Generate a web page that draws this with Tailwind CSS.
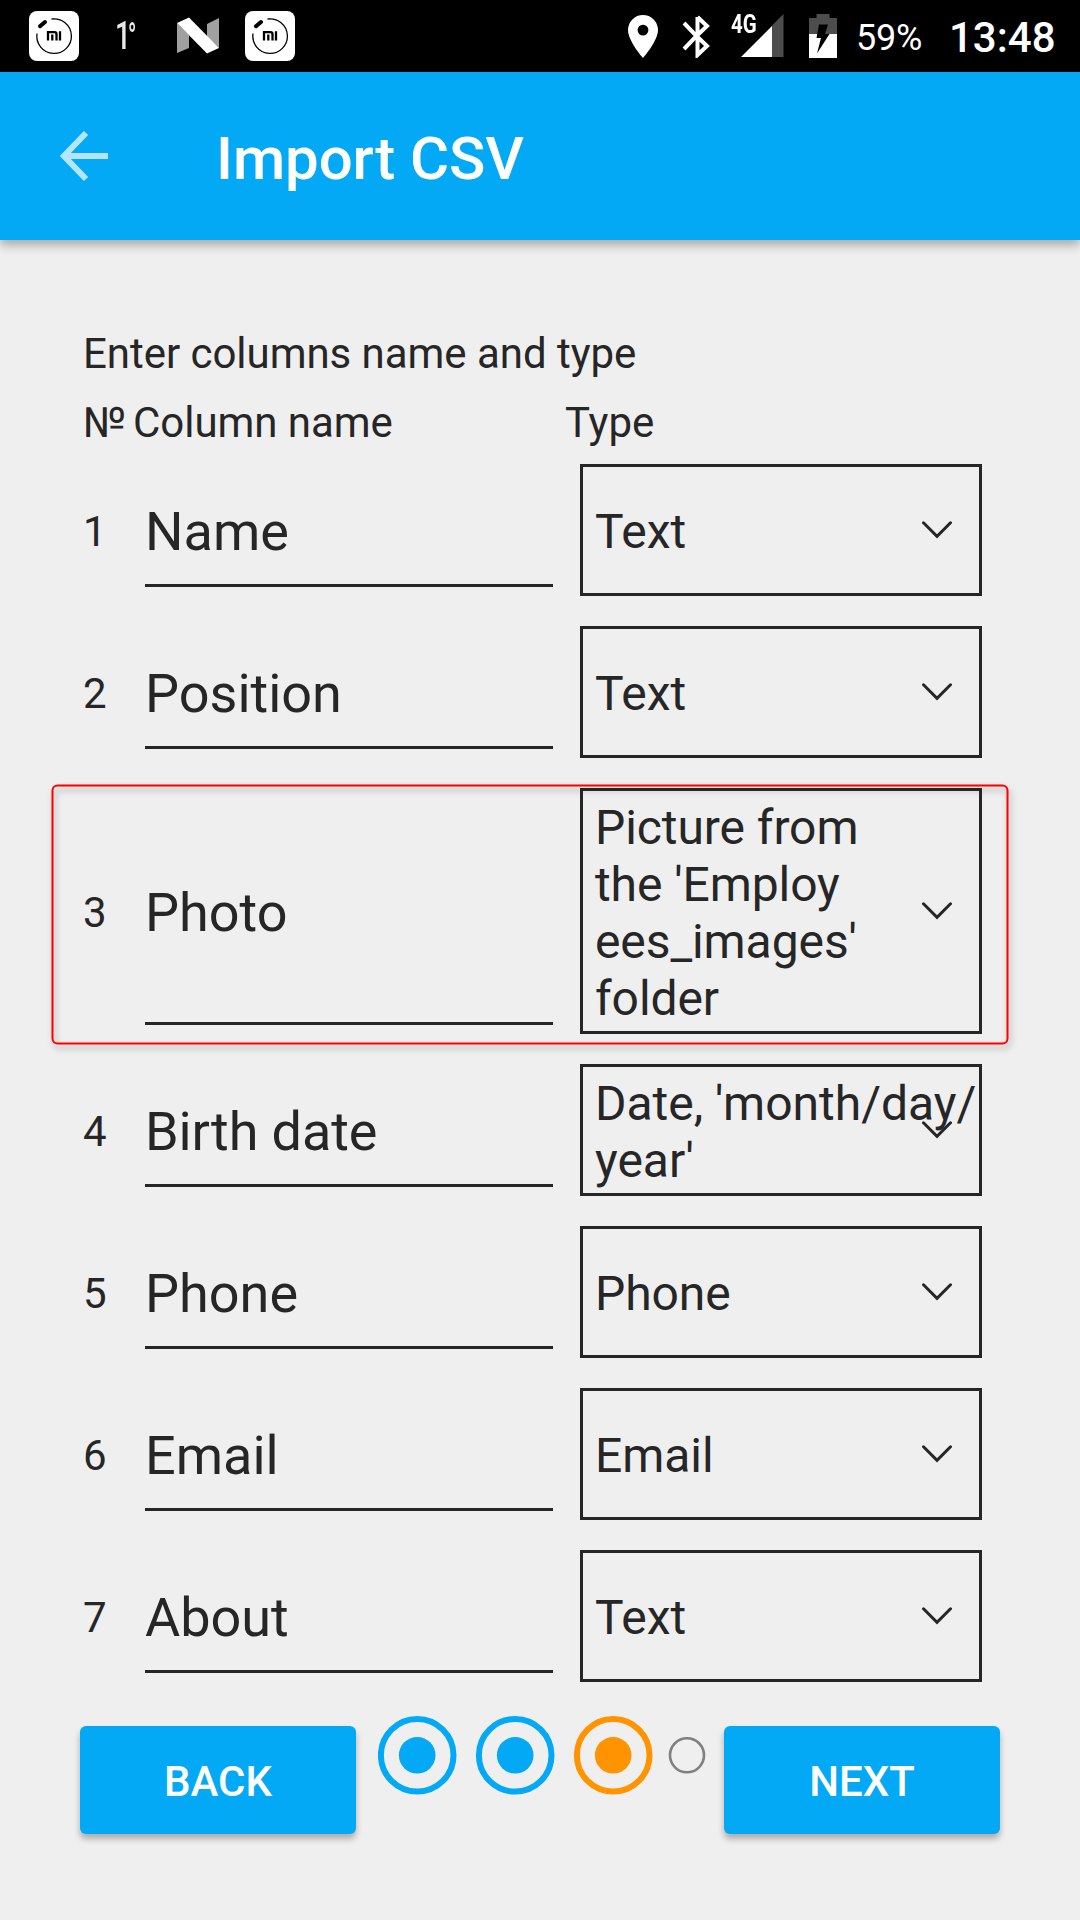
<!DOCTYPE html>
<html lang="en">
<head>
<meta charset="utf-8">
<title>Import CSV</title>
<script src="https://cdn.jsdelivr.net/npm/@tailwindcss/browser@4"></script>
</head>
<body class="w-[1080px] h-[1920px] overflow-hidden bg-[#efefef] font-['Roboto',sans-serif] text-[#262626]">
<svg class="hidden">
  <symbol id="chev" viewBox="0 0 30 18"><path d="M1.500 1.800 15 15.300 28.500 1.800" fill="none" stroke="#262626" stroke-width="3" stroke-linecap="round"/></symbol>
  <symbol id="mi" viewBox="0 0 50 50"><rect width="50" height="50" rx="8" fill="#fff"/><path d="M22.500 8A17.300 17.300 0 1 1 8 22.500" fill="none" stroke="#000" stroke-width="1.300"/><path d="M11 15.300 16 11" stroke="#000" stroke-width="4" stroke-linecap="round"/><path d="M19 29.500V21.200h6.500a2 2 0 0 1 2 2v6.300M23.300 23.500v6M31 20.200v9.300" fill="none" stroke="#000" stroke-width="2.300"/></symbol>
</svg>

<div class="h-[72px] bg-black flex items-center text-white">
  <svg class="w-[50px] h-[50px] ml-[29px]"><use href="#mi"/></svg>
  <div class="ml-[36px] w-[24px] h-[72px] flex text-[#e8e8e8]">
    <span class="text-[39px] font-medium leading-[72px] w-[13px] origin-left scale-x-[0.72]">1</span>
    <span class="text-[36px] font-bold leading-[74px] origin-left scale-x-[0.6]">°</span>
  </div>
  <svg class="w-[44px] h-[38px] ml-[37px]" viewBox="0 0 44 38"><path d="M1 6 13 18V31L1 36Z" fill="#a0a0a0"/><path d="M31 7 43 1V31L31 20Z" fill="#a0a0a0"/><path d="M1 6 13 .500 43 31 31 36.500Z" fill="#fff"/></svg>
  <svg class="w-[50px] h-[50px] ml-[25px]"><use href="#mi"/></svg>
  <svg class="w-[30px] h-[43px] ml-[333px]" viewBox="0 0 30 43"><path d="M15 0A15 15 0 0 0 0 15C0 26 15 43 15 43S30 26 30 15A15 15 0 0 0 15 0Zm0 20.500a5.400 5.400 0 1 1 0-10.800 5.400 5.400 0 0 1 0 10.800Z" fill="#fff" fill-rule="evenodd"/></svg>
  <svg class="w-[28px] h-[44px] ml-[24px]" viewBox="0 0 28 44"><path d="M2 9 14.500 22 2 35M15.500 3V41L25 32 14.500 22 25 12 15.500 3" fill="none" stroke="#fff" stroke-width="4"/></svg>
  <div class="relative w-[54px] h-[44px] ml-[20px]">
    <svg class="w-[54px] h-[44px]" viewBox="0 0 54 44"><path d="M42 43V11.500L53.500 0V43Z" fill="#4d4d4d"/><path d="M11 43 42 12V43Z" fill="#fff"/></svg>
    <span class="absolute left-[1px] top-[-3px] text-[25px] leading-[28px] font-bold origin-left scale-x-[0.82]">4G</span>
  </div>
  <svg class="w-[28px] h-[44px] ml-[25px]" viewBox="0 0 28 44"><path d="M7.500 0h13v4H28v16H0V4h7.500Z" fill="#4d4d4d"/><path d="M0 20H28V44H0Z" fill="#fff"/><path d="M10 10.500H19L16 20H20.500L8 39.500 12 24H7.500Z" fill="#000"/></svg>
  <span class="ml-[19px] w-[67px] text-[36px] leading-[42px] pt-[3px] tracking-[-0.2px]">59%</span>
  <span class="ml-[26px] text-[42px] leading-[50px] pt-[4px] font-medium whitespace-nowrap">13:48</span>
</div>

<div class="h-[168px] bg-[#04a9f6] flex items-center shadow-[0_5px_10px_rgba(0,0,0,0.3)] text-white">
  <svg class="w-[48px] h-[52px] ml-[60px] mt-[-1px]" viewBox="0 0 48 52"><path d="M26 3 4 26 26 49M4 26H48" fill="none" stroke="#b4e5fc" stroke-width="6"/></svg>
  <h1 class="ml-[108px] pt-[6px] text-[60px] font-medium leading-[70px] tracking-[-0.1px]">Import CSV</h1>
</div>

<div class="pl-[83px] pt-[88px]">
  <p class="text-[42px] leading-[52px] tracking-[-0.04px]">Enter columns name and type</p>
  <div class="flex mt-[17px] text-[42px] leading-[52px] tracking-[-0.04px]">
    <span class="w-[50px]">№</span><span class="w-[432px]">Column name</span><span>Type</span>
  </div>

  <div class="mt-[15px] flex flex-col gap-[30px]">
    <div class="flex h-[132px]"><span class="w-[62px] text-[42px] flex items-center pt-[3px]">1</span><div class="w-[408px] h-[123px] border-b-3 border-[#262626] flex items-center pt-[15px] text-[54px]">Name</div><div class="relative ml-[27px] w-[402px] border-3 border-[#262626] pl-[12px] flex items-center"><span class="pt-[3px] text-[48px] leading-[57px] tracking-[-0.05px]">Text</span><svg class="absolute left-[339px] top-1/2 -mt-[9px] w-[30px] h-[18px]"><use href="#chev"/></svg></div></div>
    <div class="flex h-[132px]"><span class="w-[62px] text-[42px] flex items-center pt-[3px]">2</span><div class="w-[408px] h-[123px] border-b-3 border-[#262626] flex items-center pt-[15px] text-[54px]">Position</div><div class="relative ml-[27px] w-[402px] border-3 border-[#262626] pl-[12px] flex items-center"><span class="pt-[3px] text-[48px] leading-[57px] tracking-[-0.05px]">Text</span><svg class="absolute left-[339px] top-1/2 -mt-[9px] w-[30px] h-[18px]"><use href="#chev"/></svg></div></div>
    <div class="relative flex h-[246px]">
      <svg class="absolute left-[-43px] top-[-16px] w-[980px] h-[285px]" viewBox="0 0 980 285"><rect x="12.500" y="13.500" width="955" height="258" rx="5" fill="none" stroke="#f00" stroke-width="2" class="drop-shadow-[2px_4px_3px_rgba(0,0,0,0.32)]"/></svg>
      <span class="w-[62px] text-[42px] flex items-center pt-[3px]">3</span><div class="w-[408px] h-[237px] border-b-3 border-[#262626] flex items-center pt-[15px] text-[54px]">Photo</div><div class="relative ml-[27px] w-[402px] border-3 border-[#262626] pl-[12px] flex items-center"><span class="pt-[4px] text-[48px] leading-[57px] tracking-[-0.08px] whitespace-nowrap">Picture from<br>the 'Employ<br>ees_images'<br>folder</span><svg class="absolute left-[339px] top-1/2 -mt-[9px] w-[30px] h-[18px]"><use href="#chev"/></svg></div></div>
    <div class="flex h-[132px]"><span class="w-[62px] text-[42px] flex items-center pt-[3px]">4</span><div class="w-[408px] h-[123px] border-b-3 border-[#262626] flex items-center pt-[15px] text-[54px] tracking-[-0.1px]">Birth date</div><div class="relative ml-[27px] w-[402px] border-3 border-[#262626] pl-[12px] flex items-center"><span class="pt-[4px] text-[48px] leading-[57px] whitespace-nowrap">Date, 'month/day/<br>year'</span><svg class="absolute left-[339px] top-1/2 -mt-[9px] w-[30px] h-[18px]"><use href="#chev"/></svg></div></div>
    <div class="flex h-[132px]"><span class="w-[62px] text-[42px] flex items-center pt-[3px]">5</span><div class="w-[408px] h-[123px] border-b-3 border-[#262626] flex items-center pt-[15px] text-[54px]">Phone</div><div class="relative ml-[27px] w-[402px] border-3 border-[#262626] pl-[12px] flex items-center"><span class="pt-[3px] text-[48px] leading-[57px] tracking-[-0.1px]">Phone</span><svg class="absolute left-[339px] top-1/2 -mt-[9px] w-[30px] h-[18px]"><use href="#chev"/></svg></div></div>
    <div class="flex h-[132px]"><span class="w-[62px] text-[42px] flex items-center pt-[3px]">6</span><div class="w-[408px] h-[123px] border-b-3 border-[#262626] flex items-center pt-[15px] text-[54px]">Email</div><div class="relative ml-[27px] w-[402px] border-3 border-[#262626] pl-[12px] flex items-center"><span class="pt-[3px] text-[48px] leading-[57px] tracking-[-0.05px]">Email</span><svg class="absolute left-[339px] top-1/2 -mt-[9px] w-[30px] h-[18px]"><use href="#chev"/></svg></div></div>
    <div class="flex h-[132px]"><span class="w-[62px] text-[42px] flex items-center pt-[3px]">7</span><div class="w-[408px] h-[123px] border-b-3 border-[#262626] flex items-center pt-[15px] text-[54px]">About</div><div class="relative ml-[27px] w-[402px] border-3 border-[#262626] pl-[12px] flex items-center"><span class="pt-[3px] text-[48px] leading-[57px] tracking-[-0.05px]">Text</span><svg class="absolute left-[339px] top-1/2 -mt-[9px] w-[30px] h-[18px]"><use href="#chev"/></svg></div></div>
  </div>
</div>

<div class="flex px-[80px] pt-[34px]">
  <button class="mt-[10px] w-[276px] h-[108px] rounded-[6px] bg-[#04a9f6] text-white text-[42px] font-medium pt-[2px] shadow-[0_5px_6px_rgba(0,0,0,0.28)]">BACK</button>
  <svg class="w-[330px] h-[80px] ml-[22px] mr-[16px]" viewBox="0 0 330 80">
    <g fill="none" stroke-width="6"><circle cx="39.200" cy="39.300" r="36.300" stroke="#04a9f6"/><circle cx="137.200" cy="39.300" r="36.300" stroke="#04a9f6"/><circle cx="235.200" cy="39.300" r="36.300" stroke="#ff9300"/></g>
    <circle cx="39.200" cy="39.300" r="18.300" fill="#04a9f6"/><circle cx="137.200" cy="39.300" r="18.300" fill="#04a9f6"/><circle cx="235.200" cy="39.300" r="18.300" fill="#ff9300"/>
    <circle cx="309" cy="39.300" r="17" fill="none" stroke="#808080" stroke-width="2.600"/>
  </svg>
  <button class="mt-[10px] w-[276px] h-[108px] rounded-[6px] bg-[#04a9f6] text-white text-[42px] font-medium pt-[2px] shadow-[0_5px_6px_rgba(0,0,0,0.28)]">NEXT</button>
</div>
</body>
</html>
